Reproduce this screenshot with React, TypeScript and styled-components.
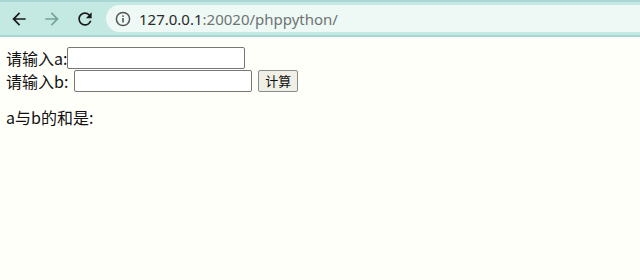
import React from "react";
import styled, { createGlobalStyle } from "styled-components";

const Global = createGlobalStyle`
  html, body { margin: 0; padding: 0; background: #fffffa; }
  body { width: 640px; height: 280px; overflow: hidden; }
`;

const Toolbar = styled.div`
  height: 33px;
  background: #c4e9e2;
  border-top: 2px solid #a9d6d2;
  border-bottom: 2px solid #a6d8d4;
  display: flex;
  align-items: center;
  padding-left: 2px;
`;

const NavButton = styled.div`
  width: 33px;
  height: 28px;
  display: flex;
  align-items: center;
  justify-content: center;
`;

const Omnibox = styled.div`
  flex: 1;
  height: 27px;
  margin-left: 5px;
  background: #eef9f5;
  border-radius: 14px 0 0 14px;
  display: flex;
  align-items: center;
  padding-left: 9px;
  gap: 8px;
  font-family: "Noto Sans", "Liberation Sans", sans-serif;
  font-size: 15px;
`;

const Host = styled.span`
  color: #2a2a2a;
`;
const Path = styled.span`
  color: #6f7373;
`;

const Page = styled.div`
  padding: 9px 6px;
  font-family: "Noto Sans CJK SC", "Noto Sans", sans-serif;
  font-size: 16px;
  color: #111;
`;

const Row = styled.div`
  display: flex;
  align-items: center;
  height: 23px;
  line-height: 20px;
`;

const Field = styled.input<{ $ml?: number }>`
  width: 172px;
  height: 18px;
  border: 1px solid #767676;
  border-radius: 2px;
  background: #fff;
  padding: 1px 2px;
  margin: 0 0 0 ${(p) => p.$ml ?? 0}px;
`;

const Btn = styled.button`
  margin-left: 6px;
  height: 22px;
  padding: 0 6px;
  font-family: "Noto Sans CJK SC", sans-serif;
  font-size: 13px;
  color: #111;
  background: #efefe6;
  border: 1px solid #8a8a8a;
  border-radius: 2px;
`;

const Result = styled.p`
  margin: 14px 0 0;
  line-height: 22px;
`;

export default function App() {
  return (
    <>
      <Global />
      <Toolbar>
        <NavButton>
          <svg width="20" height="20" viewBox="0 0 24 24">
            <path d="M20 11H7.83l5.59-5.59L12 4l-8 8 8 8 1.41-1.41L7.83 13H20v-2z" fill="#1a1a1a" />
          </svg>
        </NavButton>
        <NavButton>
          <svg width="20" height="20" viewBox="0 0 24 24">
            <path d="M4 11h12.17l-5.59-5.59L12 4l8 8-8 8-1.41-1.41L16.17 13H4v-2z" fill="#76a09c" />
          </svg>
        </NavButton>
        <NavButton>
          <svg width="20" height="20" viewBox="0 0 24 24">
            <path
              d="M17.65 6.35A7.958 7.958 0 0 0 12 4c-4.42 0-7.99 3.58-7.99 8s3.57 8 7.99 8c3.73 0 6.84-2.55 7.730-6h-2.08A5.99 5.99 0 0 1 12 18c-3.31 0-6-2.69-6-6s2.69-6 6-6c1.66 0 3.14.69 4.22 1.78L13 11h7V4l-2.35 2.35z"
              fill="#1a1a1a"
            />
          </svg>
        </NavButton>
        <Omnibox>
          <svg width="16" height="16" viewBox="0 0 16 16">
            <circle cx="8" cy="8" r="6.6" fill="none" stroke="#555" strokeWidth="1.5" />
            <rect x="7.2" y="7" width="1.6" height="4.5" fill="#555" />
            <rect x="7.2" y="4.3" width="1.6" height="1.6" fill="#555" />
          </svg>
          <span>
            <Host>127.0.0.1</Host>
            <Path>:20020/phppython/</Path>
          </span>
        </Omnibox>
      </Toolbar>
      <Page>
        <form onSubmit={(e) => e.preventDefault()}>
          <Row>
            请输入a:<Field type="text" />
          </Row>
          <Row>
            请输入b:<Field type="text" $ml={6} />
            <Btn type="submit">计算</Btn>
          </Row>
        </form>
        <Result>a与b的和是:</Result>
      </Page>
    </>
  );
}
